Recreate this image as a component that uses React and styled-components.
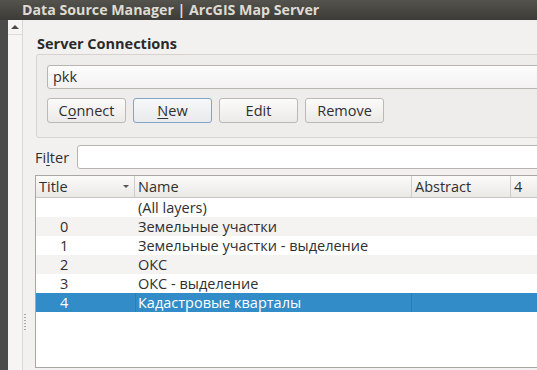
import React from 'react';
import styled, { createGlobalStyle, css } from 'styled-components';

const GlobalStyle = createGlobalStyle`
  html, body {
    margin: 0;
    padding: 0;
  }
  body {
    font-family: "Open Sans", "Noto Sans", sans-serif;
    font-size: 14.5px;
    color: #2f2f2f;
    background: #f2f1f0;
  }
`;

const Window = styled.div`
  width: 537px;
  height: 370px;
  overflow: hidden;
  display: flex;
  flex-direction: column;
`;

const TitleBar = styled.div`
  height: 20px;
  flex: none;
  padding-left: 22px;
  line-height: 19px;
  font-weight: bold;
  font-size: 14.2px;
  color: #dfdbd2;
  background: linear-gradient(#55534d, #3c3b37);
  white-space: nowrap;
`;

const Body = styled.div`
  flex: 1;
  display: flex;
  min-height: 0;
`;

const DarkEdge = styled.div`
  width: 8px;
  flex: none;
  background: #4b4b49;
`;

const SideStrip = styled.div`
  width: 14px;
  flex: none;
  background: #f6f5f4;
  border-right: 1px solid #dad7d3;
`;

const ScrollUp = styled.div`
  height: 14px;
  border-bottom: 1px solid #dedbd7;
  display: flex;
  align-items: center;
  justify-content: center;
  &::after {
    content: '';
    border-left: 4px solid transparent;
    border-right: 4px solid transparent;
    border-bottom: 4px solid #4a4a4a;
  }
`;

const Handle = styled.div`
  width: 12px;
  flex: none;
  display: flex;
  flex-direction: column;
  justify-content: flex-end;
  padding-bottom: 38px;
  box-sizing: border-box;
`;

const GripDots = styled.div`
  width: 2px;
  height: 18px;
  margin-left: 1px;
  background: repeating-linear-gradient(#a9a6a2 0 1px, transparent 1px 3px);
`;

const Content = styled.div`
  width: 560px;
  flex: none;
  padding-top: 15px;
  display: flex;
  flex-direction: column;
`;

const GroupTitle = styled.div`
  padding-left: 2px;
  height: 17px;
  line-height: 17px;
  font-weight: bold;
  color: #2a2a2a;
  margin-bottom: 2px;
`;

const GroupBox = styled.div`
  margin-left: 1px;
  border: 1px solid #d6d3cf;
  border-radius: 3px;
  background: #eeedeb;
  padding: 10px 0 14px 10px;
`;

const Combo = styled.div`
  height: 24px;
  box-sizing: border-box;
  border: 1px solid #b8b5b0;
  border-radius: 3px;
  background: linear-gradient(#fdfdfd, #f3f2f1);
  padding-left: 5px;
  line-height: 22px;
`;

const ButtonRow = styled.div`
  display: flex;
  gap: 7px;
  margin-top: 9px;
`;

const Button = styled.div`
  width: 79px;
  height: 25px;
  box-sizing: border-box;
  border: 1px solid #bcb8b3;
  border-radius: 3px;
  background: linear-gradient(#fbfbfa, #eceae8);
  display: flex;
  align-items: center;
  justify-content: center;
  ${(props) =>
    props.focused &&
    css`
      border-color: #7fa4c8;
      background: linear-gradient(#f7f8f9, #e9eaec);
    `}
`;

const Mnemonic = styled.span`
  text-decoration: underline;
  text-underline-offset: 2px;
`;

const FilterRow = styled.div`
  display: flex;
  align-items: center;
  margin-top: 7px;
`;

const FilterLabel = styled.div`
  width: 42px;
  flex: none;
`;

const FilterInput = styled.div`
  flex: 1;
  height: 24px;
  box-sizing: border-box;
  border: 1px solid #b8b5b0;
  border-radius: 3px;
  background: #fff;
`;

const Table = styled.div`
  margin-top: 6px;
  height: 193px;
  box-sizing: border-box;
  border: 1px solid #aaa7a2;
  background: #fff;
`;

const columns = '99px 277px 99px 1fr';

const HeaderRow = styled.div`
  display: grid;
  grid-template-columns: ${columns};
  height: 21px;
  border-bottom: 1px solid #c9c6c1;
  background: linear-gradient(#fbfbfa, #ebe9e6);
`;

const HeaderCell = styled.div`
  position: relative;
  padding-left: 3px;
  line-height: 21px;
  border-right: 1px solid #cfccc7;
`;

const SortArrow = styled.span`
  position: absolute;
  right: 5px;
  top: 9px;
  border-left: 3px solid transparent;
  border-right: 3px solid transparent;
  border-top: 3px solid #555;
`;

const Row = styled.div`
  display: grid;
  grid-template-columns: ${columns};
  height: 19px;
  line-height: 19px;
  background: ${(props) => (props.alt ? '#f4f3f1' : '#fff')};
  ${(props) =>
    props.selected &&
    css`
      background: #318cc7;
      color: #fff;
    `}
`;

const Cell = styled.div`
  padding-left: ${(props) => (props.indent ? '24px' : '3px')};
  white-space: nowrap;
  ${(props) =>
    props.divided &&
    css`
      border-left: 1px solid #2b7db5;
      border-right: 1px solid #2b7db5;
      padding-left: 2px;
    `}
`;

const layers = [
  { id: '', name: '(All layers)' },
  { id: '0', name: 'Земельные участки' },
  { id: '1', name: 'Земельные участки - выделение' },
  { id: '2', name: 'ОКС' },
  { id: '3', name: 'ОКС - выделение' },
  { id: '4', name: 'Кадастровые кварталы', selected: true },
];

function App() {
  return (
    <Window>
      <GlobalStyle />
      <TitleBar>Data Source Manager | ArcGIS Map Server</TitleBar>
      <Body>
        <DarkEdge />
        <SideStrip>
          <ScrollUp />
        </SideStrip>
        <Handle>
          <GripDots />
        </Handle>
        <Content>
          <GroupTitle>Server Connections</GroupTitle>
          <GroupBox>
            <Combo>pkk</Combo>
            <ButtonRow>
              <Button>
                C<Mnemonic>o</Mnemonic>nnect
              </Button>
              <Button focused>
                <Mnemonic>N</Mnemonic>ew
              </Button>
              <Button>Edit</Button>
              <Button>Remove</Button>
            </ButtonRow>
          </GroupBox>
          <FilterRow>
            <FilterLabel>
              Fi<Mnemonic>l</Mnemonic>ter
            </FilterLabel>
            <FilterInput />
          </FilterRow>
          <Table>
            <HeaderRow>
              <HeaderCell>
                Title
                <SortArrow />
              </HeaderCell>
              <HeaderCell>Name</HeaderCell>
              <HeaderCell>Abstract</HeaderCell>
              <HeaderCell>4</HeaderCell>
            </HeaderRow>
            {layers.map((layer, i) => (
              <Row key={i} alt={i % 2 === 1} selected={layer.selected}>
                <Cell indent>{layer.id}</Cell>
                <Cell divided={layer.selected}>{layer.name}</Cell>
                <Cell />
                <Cell />
              </Row>
            ))}
          </Table>
        </Content>
      </Body>
    </Window>
  );
}

export default App;
